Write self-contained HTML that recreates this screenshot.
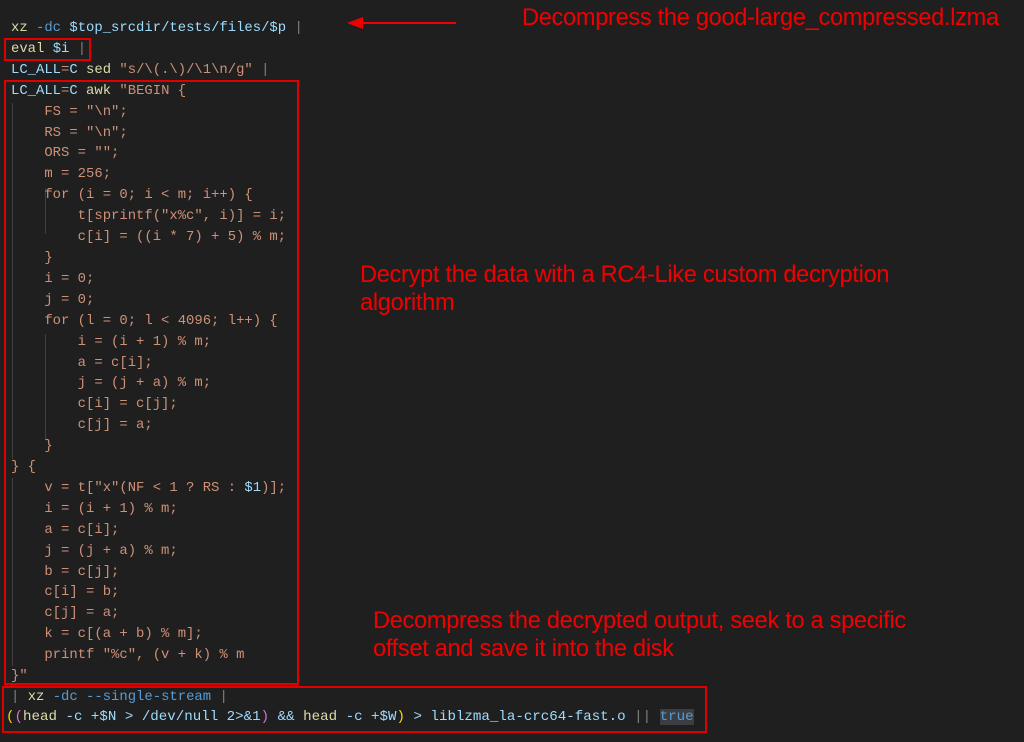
<!DOCTYPE html>
<html><head><meta charset="utf-8">
<style>
body{margin:0;width:1024px;height:742px;background:#1f1f1f;overflow:hidden;position:relative}
pre{position:absolute;left:11px;top:18px;margin:0;font-family:"Liberation Mono",monospace;font-size:13.9px;line-height:20.9px;color:#ce9178;white-space:pre}
.y{color:#dcdcaa}.b{color:#569cd6}.v{color:#9cdcfe}.g{color:#808080}.p{color:#da70d6}.o{color:#ffd700}
.box{position:absolute;border:2px solid #e00000;box-sizing:border-box}
.t{position:absolute;color:#f00000;font-family:"Liberation Sans",sans-serif;font-size:23.6px;letter-spacing:-0.3px;line-height:28px}
.guide{position:absolute;left:12px;width:1px;background:#404040}
</style></head><body>
<div class="guide" style="top:103px;height:356px"></div>
<div class="guide" style="top:188px;height:46px;left:45px"></div>
<div class="guide" style="top:334px;height:106px;left:45px"></div>
<div class="guide" style="top:478px;height:188px"></div>
<pre><span class="y">xz</span> <span class="b">-dc</span> <span class="v">$top_srcdir/tests/files/$p</span> <span class="g">|</span>
<span class="y">eval</span> <span class="v">$i</span> <span class="g">|</span>
<span class="v">LC_ALL</span>=<span class="v">C</span> <span class="y">sed</span> "s/\(.\)/\1\n/g" <span class="g">|</span>
<span class="v">LC_ALL</span>=<span class="v">C</span> <span class="y">awk</span> "BEGIN {
    FS = "\n";
    RS = "\n";
    ORS = "";
    m = 256;
    for (i = 0; i &lt; m; i++) {
        t[sprintf("x%c", i)] = i;
        c[i] = ((i * 7) + 5) % m;
    }
    i = 0;
    j = 0;
    for (l = 0; l &lt; 4096; l++) {
        i = (i + 1) % m;
        a = c[i];
        j = (j + a) % m;
        c[i] = c[j];
        c[j] = a;
    }
} {
    v = t["x"(NF &lt; 1 ? RS : <span class="v">$1</span>)];
    i = (i + 1) % m;
    a = c[i];
    j = (j + a) % m;
    b = c[j];
    c[i] = b;
    c[j] = a;
    k = c[(a + b) % m];
    printf "%c", (v + k) % m
}"
<span class="g">|</span> <span class="y">xz</span> <span class="b">-dc --single-stream</span> <span class="g">|</span>
</pre>
<pre style="left:6px;top:707px;font-size:14.15px"><span class="o">(</span><span class="p">(</span><span class="y">head</span> <span class="v">-c +$N &gt; /dev/null 2&gt;&amp;1</span><span class="p">)</span> <span class="v">&amp;&amp;</span> <span class="y">head</span> <span class="v">-c +$W</span><span class="o">)</span> <span class="v">&gt; liblzma_la-crc64-fast.o</span> <span class="g">||</span> <span class="b" style="background:#3a3d41">true</span></pre>
<div class="box" style="left:4px;top:38px;width:87px;height:23px"></div>
<div class="box" style="left:4px;top:80px;width:295px;height:605px"></div>
<div class="box" style="left:2px;top:686px;width:705px;height:47px"></div>
<svg style="position:absolute;left:345px;top:14px" width="115" height="18"><line x1="12" y1="9" x2="111" y2="9" stroke="#f00000" stroke-width="2"/><polygon points="2,9 18,3 18,15" fill="#f00000"/></svg>
<div class="t" style="left:522px;top:4px">Decompress the good-large_compressed.lzma</div>
<div class="t" style="left:360px;top:261px">Decrypt the data with a RC4-Like custom decryption<br>algorithm</div>
<div class="t" style="left:373px;top:607px">Decompress the decrypted output, seek to a specific<br>offset and save it into the disk</div>
</body></html>
